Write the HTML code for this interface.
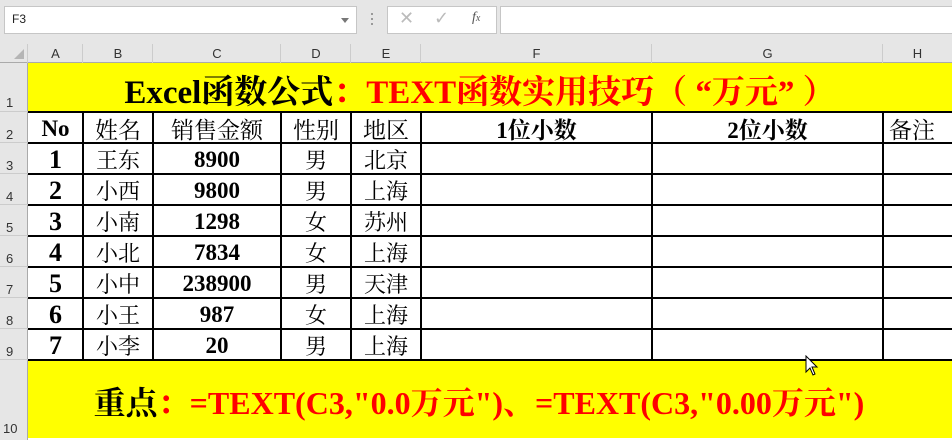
<!DOCTYPE html>
<html><head><meta charset="utf-8"><style>
*{margin:0;padding:0;box-sizing:border-box}
body{width:952px;height:440px;overflow:hidden;background:#e6e6e6;position:relative;font-family:"Liberation Serif","Noto Serif CJK SC",serif}
.a{position:absolute}
.hdr{font-family:"Liberation Sans",sans-serif;font-size:13px;color:#333;text-align:center;background:#e6e6e6}
.cell{position:absolute;display:flex;align-items:center;justify-content:center;font-weight:bold;color:#000;white-space:nowrap}
.hl{position:absolute;background:#000;height:2px}
.vl{position:absolute;background:#000;width:2px}
</style></head><body>
<div class="a" style="left:4px;top:6px;width:353px;height:28px;background:#fff;border:1px solid #c6c6c6"></div>
<div class="a" style="left:12px;top:12px;font-family:'Liberation Sans',sans-serif;font-size:12px;color:#222">F3</div>
<div class="a" style="left:341px;top:18px;width:0;height:0;border-left:4px solid transparent;border-right:4px solid transparent;border-top:5px solid #777"></div>
<div class="a" style="left:371px;top:13px;width:2px;height:2px;background:#999;box-shadow:0 5px #999,0 10px #999"></div>
<div class="a" style="left:387px;top:6px;width:110px;height:28px;background:#fff;border:1px solid #c6c6c6"></div>
<div class="a" style="left:399px;top:8px;font-family:'Liberation Sans',sans-serif;font-size:18px;color:#bbb">✕</div>
<div class="a" style="left:434px;top:8px;font-family:'DejaVu Sans',sans-serif;font-size:18px;color:#bbb">✓</div>
<div class="a" style="left:472px;top:10px;font-family:'Liberation Serif',serif;font-style:italic;font-size:14px;color:#555">f<span style="font-size:10px">x</span></div>
<div class="a" style="left:500px;top:6px;width:460px;height:28px;background:#fff;border:1px solid #c6c6c6"></div>
<div class="a" style="left:0;top:44px;width:952px;height:19px;background:#e6e6e6;border-bottom:1px solid #aaa"></div>
<div class="a" style="left:14px;top:49px;width:0;height:0;border-left:10px solid transparent;border-bottom:10px solid #b5b5b5"></div>
<div class="a hdr" style="left:28px;top:46px;width:55px">A</div>
<div class="a hdr" style="left:83px;top:46px;width:70px">B</div>
<div class="a hdr" style="left:153px;top:46px;width:128px">C</div>
<div class="a hdr" style="left:281px;top:46px;width:70px">D</div>
<div class="a hdr" style="left:351px;top:46px;width:70px">E</div>
<div class="a hdr" style="left:421px;top:46px;width:231px">F</div>
<div class="a hdr" style="left:652px;top:46px;width:231px">G</div>
<div class="a hdr" style="left:883px;top:46px;width:69px">H</div>
<div class="a" style="left:27px;top:44px;width:1px;height:19px;background:#ccc"></div>
<div class="a" style="left:82px;top:44px;width:1px;height:19px;background:#ccc"></div>
<div class="a" style="left:152px;top:44px;width:1px;height:19px;background:#ccc"></div>
<div class="a" style="left:280px;top:44px;width:1px;height:19px;background:#ccc"></div>
<div class="a" style="left:350px;top:44px;width:1px;height:19px;background:#ccc"></div>
<div class="a" style="left:420px;top:44px;width:1px;height:19px;background:#ccc"></div>
<div class="a" style="left:651px;top:44px;width:1px;height:19px;background:#ccc"></div>
<div class="a" style="left:882px;top:44px;width:1px;height:19px;background:#ccc"></div>
<div class="a" style="left:0;top:63px;width:28px;height:377px;background:#e6e6e6;border-right:1px solid #aaa"></div>
<div class="a hdr" style="left:0;top:95px;width:26px;text-align:left;padding-left:6px">1</div>
<div class="a hdr" style="left:0;top:127px;width:26px;text-align:left;padding-left:6px">2</div>
<div class="a hdr" style="left:0;top:158px;width:26px;text-align:left;padding-left:6px">3</div>
<div class="a hdr" style="left:0;top:189px;width:26px;text-align:left;padding-left:6px">4</div>
<div class="a hdr" style="left:0;top:220px;width:26px;text-align:left;padding-left:6px">5</div>
<div class="a hdr" style="left:0;top:251px;width:26px;text-align:left;padding-left:6px">6</div>
<div class="a hdr" style="left:0;top:282px;width:26px;text-align:left;padding-left:6px">7</div>
<div class="a hdr" style="left:0;top:313px;width:26px;text-align:left;padding-left:6px">8</div>
<div class="a hdr" style="left:0;top:344px;width:26px;text-align:left;padding-left:6px">9</div>
<div class="a hdr" style="left:0;top:421px;width:26px;text-align:left;padding-left:3px">10</div>
<div class="a" style="left:0;top:111px;width:28px;height:1px;background:#ccc"></div>
<div class="a" style="left:0;top:142px;width:28px;height:1px;background:#ccc"></div>
<div class="a" style="left:0;top:173px;width:28px;height:1px;background:#ccc"></div>
<div class="a" style="left:0;top:204px;width:28px;height:1px;background:#ccc"></div>
<div class="a" style="left:0;top:235px;width:28px;height:1px;background:#ccc"></div>
<div class="a" style="left:0;top:266px;width:28px;height:1px;background:#ccc"></div>
<div class="a" style="left:0;top:297px;width:28px;height:1px;background:#ccc"></div>
<div class="a" style="left:0;top:328px;width:28px;height:1px;background:#ccc"></div>
<div class="a" style="left:0;top:359px;width:28px;height:1px;background:#ccc"></div>
<div class="a" style="left:28px;top:63px;width:924px;height:49px;background:#ff0"></div>
<div class="a" style="left:28px;top:112px;width:924px;height:248px;background:#fff"></div>
<div class="a" style="left:28px;top:360px;width:924px;height:78px;background:#ff0"></div>
<div class="a" style="left:28px;top:438px;width:924px;height:2px;background:#fff"></div>
<div class="cell" style="left:28px;top:66px;width:924px;height:47px;font-size:33px;padding-right:20px"><span>Excel函数公式<span style="color:#f00">：TEXT函数实用技巧（ “万元” ）</span></span></div>
<div class="cell" style="left:28px;top:363px;width:924px;height:76px;font-size:32px;padding-right:22px"><span>重点<span style="color:#f00">：=TEXT(C3,"0.0万元")、=TEXT(C3,"0.00万元")</span></span></div>
<div class="hl" style="left:28px;top:111px;width:924px"></div>
<div class="hl" style="left:28px;top:142px;width:924px"></div>
<div class="hl" style="left:28px;top:173px;width:924px"></div>
<div class="hl" style="left:28px;top:204px;width:924px"></div>
<div class="hl" style="left:28px;top:235px;width:924px"></div>
<div class="hl" style="left:28px;top:266px;width:924px"></div>
<div class="hl" style="left:28px;top:297px;width:924px"></div>
<div class="hl" style="left:28px;top:328px;width:924px"></div>
<div class="hl" style="left:28px;top:359px;width:924px"></div>
<div class="vl" style="left:82px;top:112px;height:248px"></div>
<div class="vl" style="left:152px;top:112px;height:248px"></div>
<div class="vl" style="left:280px;top:112px;height:248px"></div>
<div class="vl" style="left:350px;top:112px;height:248px"></div>
<div class="vl" style="left:420px;top:112px;height:248px"></div>
<div class="vl" style="left:651px;top:112px;height:248px"></div>
<div class="vl" style="left:882px;top:112px;height:248px"></div>
<div class="cell" style="left:28px;top:113px;width:55px;height:31px;font-size:23px">No</div>
<div class="cell" style="left:83px;top:113px;width:70px;height:31px;font-size:23px;font-weight:normal">姓名</div>
<div class="cell" style="left:153px;top:113px;width:128px;height:31px;font-size:23px;font-weight:normal">销售金额</div>
<div class="cell" style="left:281px;top:113px;width:70px;height:31px;font-size:23px;font-weight:normal">性别</div>
<div class="cell" style="left:351px;top:113px;width:70px;height:31px;font-size:23px;font-weight:normal">地区</div>
<div class="cell" style="left:421px;top:113px;width:231px;height:31px;font-size:23px">1位小数</div>
<div class="cell" style="left:652px;top:113px;width:231px;height:31px;font-size:23px">2位小数</div>
<div class="cell" style="left:883px;top:113px;width:69px;height:31px;font-size:23px;justify-content:flex-start;padding-left:6px;font-weight:normal">备注</div>
<div class="cell" style="left:28px;top:144px;width:55px;height:31px;font-size:26px">1</div><div class="cell" style="left:83px;top:144px;width:70px;height:31px;font-size:22px;font-weight:normal">王东</div><div class="cell" style="left:153px;top:144px;width:128px;height:31px;font-size:23px">8900</div><div class="cell" style="left:281px;top:144px;width:70px;height:31px;font-size:22px;font-weight:normal">男</div><div class="cell" style="left:351px;top:144px;width:70px;height:31px;font-size:22px;font-weight:normal">北京</div>
<div class="cell" style="left:28px;top:175px;width:55px;height:31px;font-size:26px">2</div><div class="cell" style="left:83px;top:175px;width:70px;height:31px;font-size:22px;font-weight:normal">小西</div><div class="cell" style="left:153px;top:175px;width:128px;height:31px;font-size:23px">9800</div><div class="cell" style="left:281px;top:175px;width:70px;height:31px;font-size:22px;font-weight:normal">男</div><div class="cell" style="left:351px;top:175px;width:70px;height:31px;font-size:22px;font-weight:normal">上海</div>
<div class="cell" style="left:28px;top:206px;width:55px;height:31px;font-size:26px">3</div><div class="cell" style="left:83px;top:206px;width:70px;height:31px;font-size:22px;font-weight:normal">小南</div><div class="cell" style="left:153px;top:206px;width:128px;height:31px;font-size:23px">1298</div><div class="cell" style="left:281px;top:206px;width:70px;height:31px;font-size:22px;font-weight:normal">女</div><div class="cell" style="left:351px;top:206px;width:70px;height:31px;font-size:22px;font-weight:normal">苏州</div>
<div class="cell" style="left:28px;top:237px;width:55px;height:31px;font-size:26px">4</div><div class="cell" style="left:83px;top:237px;width:70px;height:31px;font-size:22px;font-weight:normal">小北</div><div class="cell" style="left:153px;top:237px;width:128px;height:31px;font-size:23px">7834</div><div class="cell" style="left:281px;top:237px;width:70px;height:31px;font-size:22px;font-weight:normal">女</div><div class="cell" style="left:351px;top:237px;width:70px;height:31px;font-size:22px;font-weight:normal">上海</div>
<div class="cell" style="left:28px;top:268px;width:55px;height:31px;font-size:26px">5</div><div class="cell" style="left:83px;top:268px;width:70px;height:31px;font-size:22px;font-weight:normal">小中</div><div class="cell" style="left:153px;top:268px;width:128px;height:31px;font-size:23px">238900</div><div class="cell" style="left:281px;top:268px;width:70px;height:31px;font-size:22px;font-weight:normal">男</div><div class="cell" style="left:351px;top:268px;width:70px;height:31px;font-size:22px;font-weight:normal">天津</div>
<div class="cell" style="left:28px;top:299px;width:55px;height:31px;font-size:26px">6</div><div class="cell" style="left:83px;top:299px;width:70px;height:31px;font-size:22px;font-weight:normal">小王</div><div class="cell" style="left:153px;top:299px;width:128px;height:31px;font-size:23px">987</div><div class="cell" style="left:281px;top:299px;width:70px;height:31px;font-size:22px;font-weight:normal">女</div><div class="cell" style="left:351px;top:299px;width:70px;height:31px;font-size:22px;font-weight:normal">上海</div>
<div class="cell" style="left:28px;top:330px;width:55px;height:31px;font-size:26px">7</div><div class="cell" style="left:83px;top:330px;width:70px;height:31px;font-size:22px;font-weight:normal">小李</div><div class="cell" style="left:153px;top:330px;width:128px;height:31px;font-size:23px">20</div><div class="cell" style="left:281px;top:330px;width:70px;height:31px;font-size:22px;font-weight:normal">男</div><div class="cell" style="left:351px;top:330px;width:70px;height:31px;font-size:22px;font-weight:normal">上海</div>
<svg class="a" style="left:805px;top:355px" width="14" height="22" viewBox="0 0 14 22"><path d="M1 1 L1 17 L5 13 L8 20 L10 19 L7 12 L12 12 Z" fill="#fff" stroke="#000" stroke-width="1"/></svg>
</body></html>
